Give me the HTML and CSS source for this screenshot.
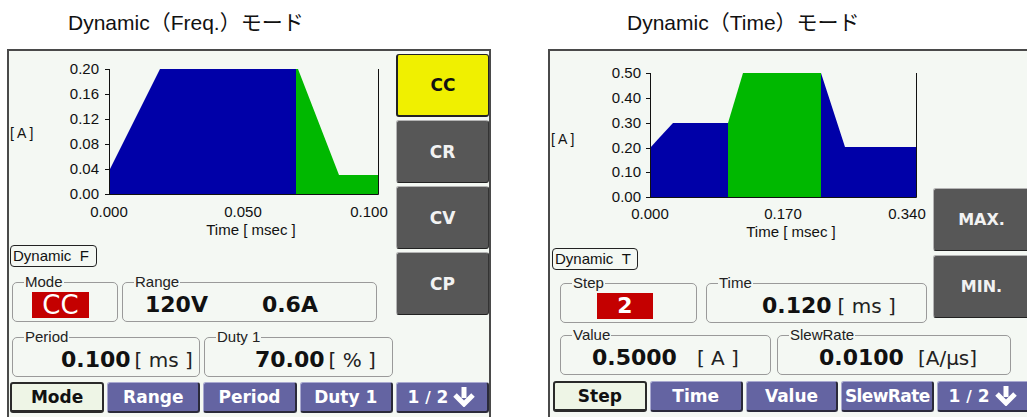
FILE: index.html
```html
<!DOCTYPE html>
<html lang="ja">
<head>
	<meta charset="UTF-8">
	<title>Dynamic モード</title>
	<meta name="viewport" content="width=device-width, initial-scale=1.0">
	<link rel="stylesheet" href="styles.css">
</head>
<body>

	<div class="page">

		<!-- Dynamic (Freq.) -->
		<section class="card card-freq">
			<h2 class="card-title">Dynamic（Freq.）モード</h2>
			<div class="screen">
				<div class="screen-body">
					<div class="screen-main">
						<svg class="chart" width="387" height="190" viewBox="9 51 387 190">
							<polygon class="wave-blue" points="109,194 109,171 160,69 296,69 296,194"/>
							<polygon class="wave-green" points="296,194 296,69 298,69 339,175 378,175 378,194"/>
							<path class="axis" d="M109.5 69V194.5H378.5V69M105 69.5h5M105 94.5h5M105 119.5h5M105 144.5h5M105 169.5h5M105 194.5h5"/>
							<text x="99" y="74" text-anchor="end">0.20</text>
							<text x="99" y="99" text-anchor="end">0.16</text>
							<text x="99" y="124" text-anchor="end">0.12</text>
							<text x="99" y="149" text-anchor="end">0.08</text>
							<text x="99" y="174" text-anchor="end">0.04</text>
							<text x="99" y="199" text-anchor="end">0.00</text>
							<text class="unit" x="10" y="138">[ A ]</text>
							<text x="109" y="217" text-anchor="middle">0.000</text>
							<text x="243" y="217" text-anchor="middle">0.050</text>
							<text x="369" y="217" text-anchor="middle">0.100</text>
							<text x="251" y="235" text-anchor="middle">Time [ msec ]</text>
						</svg>
						<div class="tag">Dynamic&nbsp;&nbsp;F</div>
						<div class="row row-top">
							<fieldset class="box w-mode">
								<legend>Mode</legend>
								<div class="val"><span class="flag flag-mode">CC</span></div>
							</fieldset>
							<fieldset class="box w-range">
								<legend>Range</legend>
								<div class="val"><span class="num">120V</span><span class="num range-cur">0.6A</span></div>
							</fieldset>
						</div>
					</div>
					<div class="screen-side">
						<div class="key is-on">CC</div>
						<div class="key">CR</div>
						<div class="key">CV</div>
						<div class="key">CP</div>
					</div>
				</div>
				<div class="row row-bottom">
					<fieldset class="box w-period">
						<legend>Period</legend>
						<div class="val"><span class="num">0.100</span><span class="unit-text">[ ms ]</span></div>
					</fieldset>
					<fieldset class="box w-duty">
						<legend>Duty 1</legend>
						<div class="val"><span class="num">70.00</span><span class="unit-text">[ % ]</span></div>
					</fieldset>
				</div>
				<div class="tabs">
					<div class="tab is-on">Mode</div>
					<div class="tab">Range</div>
					<div class="tab">Period</div>
					<div class="tab">Duty 1</div>
					<div class="tab tab-page"><span>1 <i>/</i> 2</span><svg class="arrow" width="24" height="20" viewBox="0 0 24 20"><path d="M9.5 0h5v11h-5z"/><path d="M3 8l9 9 9-9" fill="none" stroke="#fff" stroke-width="5"/></svg></div>
				</div>
			</div>
		</section>

		<!-- Dynamic (Time) -->
		<section class="card card-time">
			<h2 class="card-title">Dynamic（Time）モード</h2>
			<div class="screen">
				<div class="screen-body">
					<div class="screen-main">
						<svg class="chart" width="383" height="190" viewBox="550 51 383 190">
							<polygon class="wave-blue" points="650,197 650,148 660,137 673,123 728,123 728,197"/>
							<polygon class="wave-green" points="728,197 728,123 743,73 821,73 821,197"/>
							<polygon class="wave-blue" points="821,197 821,73 845,147 916,147 916,197"/>
							<path class="axis" d="M650.5 73V197.5H916.5V73M646 73.5h5M646 98.5h5M646 123.5h5M646 148.5h5M646 172.5h5M646 197.5h5"/>
							<text x="641" y="78" text-anchor="end">0.50</text>
							<text x="641" y="103" text-anchor="end">0.40</text>
							<text x="641" y="128" text-anchor="end">0.30</text>
							<text x="641" y="153" text-anchor="end">0.20</text>
							<text x="641" y="177" text-anchor="end">0.10</text>
							<text x="641" y="202" text-anchor="end">0.00</text>
							<text class="unit" x="551" y="144">[ A ]</text>
							<text x="650" y="219" text-anchor="middle">0.000</text>
							<text x="783" y="219" text-anchor="middle">0.170</text>
							<text x="907" y="219" text-anchor="middle">0.340</text>
							<text x="791" y="237" text-anchor="middle">Time [ msec ]</text>
						</svg>
						<div class="tag">Dynamic&nbsp;&nbsp;T</div>
						<div class="row row-top">
							<fieldset class="box w-step">
								<legend>Step</legend>
								<div class="val"><span class="flag flag-step">2</span></div>
							</fieldset>
							<fieldset class="box w-time">
								<legend>Time</legend>
								<div class="val"><span class="num">0.120</span><span class="unit-text">[ ms ]</span></div>
							</fieldset>
						</div>
					</div>
					<div class="screen-side">
						<div class="key">MAX.</div>
						<div class="key">MIN.</div>
					</div>
				</div>
				<div class="row row-bottom">
					<fieldset class="box w-value">
						<legend>Value</legend>
						<div class="val"><span class="num">0.5000</span><span class="unit-text unit-a">[ A ]</span></div>
					</fieldset>
					<fieldset class="box w-slew">
						<legend>SlewRate</legend>
						<div class="val"><span class="num">0.0100</span><span class="unit-text unit-slew">[A/μs]</span></div>
					</fieldset>
				</div>
				<div class="tabs">
					<div class="tab is-on">Step</div>
					<div class="tab">Time</div>
					<div class="tab">Value</div>
					<div class="tab tab-tight">SlewRate</div>
					<div class="tab tab-page"><span>1 <i>/</i> 2</span><svg class="arrow" width="24" height="20" viewBox="0 0 24 20"><path d="M9.5 0h5v11h-5z"/><path d="M3 8l9 9 9-9" fill="none" stroke="#fff" stroke-width="5"/></svg></div>
				</div>
			</div>
		</section>

	</div>

</body>
</html>
```

FILE: styles.css
```css
html, body {
	background: #fff;
	margin: 0;
	overflow: hidden;
	padding: 0;
}
.page {
	display: flex;
	height: 417px;
	width: 1027px;
}
.card {
	flex: none;
	width: 484px;
}
.card-freq {
	margin-left: 7px;
}
.card-time {
	margin-left: 57px;
}
.card-title {
	color: #111;
	font: normal 21px/24px "Liberation Sans", "Noto Sans CJK JP", sans-serif;
	margin: 0;
	padding: 11px 0 14px;
}
.card-freq .card-title {
	padding-left: 61px;
}
.card-time .card-title {
	padding-left: 79px;
}

/* instrument screen */
.screen {
	background: #f4f8f3;
	border: 2px solid #4a4a4a;
	border-bottom: none;
	display: flex;
	flex-direction: column;
	height: 380px;
}
.screen-body {
	display: flex;
}
.screen-main {
	display: flex;
	flex-direction: column;
	flex: none;
}
.card-freq .screen-main {
	width: 387px;
}
.card-time .screen-main {
	width: 383px;
}
.screen-side {
	display: flex;
	flex: 1;
	flex-direction: column;
	gap: 3px;
}
.card-freq .screen-side {
	padding-top: 3px;
}
.card-time .screen-side {
	gap: 4px;
	padding-top: 137px;
}

/* chart */
.chart {
	display: block;
}
.chart text {
	fill: #111;
	font: 15px "Liberation Sans", sans-serif;
}
.chart .unit {
	font-size: 14px;
}
.wave-blue {
	fill: #0000a8;
}
.wave-green {
	fill: #00b800;
}
.axis {
	fill: none;
	stroke: #111;
	stroke-width: 1;
}

.tag {
	align-self: flex-start;
	border: 1px solid #222;
	border-radius: 4px;
	box-sizing: border-box;
	color: #111;
	font: 15px/20px "Liberation Sans", sans-serif;
	height: 22px;
	padding: 0 3px 0 2px;
}
.card-freq .tag {
	margin: 4px 0 0 1px;
	width: 87px;
}
.card-time .tag {
	margin: 7px 0 0 2px;
	width: 86px;
}

/* value boxes */
.row {
	display: flex;
}
.card-freq .row {
	gap: 4px;
	padding-left: 3px;
}
.card-freq .row-top {
	margin-top: 8px;
}
.card-freq .row-bottom {
	margin-top: 8px;
}
.card-time .row {
	padding-left: 10px;
}
.card-time .row-top {
	gap: 9px;
	margin-top: 6px;
}
.card-time .row-bottom {
	gap: 6px;
	margin-top: 5px;
}
.box {
	border: 1px solid #9a9a9a;
	border-radius: 5px;
	box-sizing: border-box;
	height: 47px;
	margin: 0;
	min-width: 0;
	padding: 0;
}
.box legend {
	color: #222;
	font: 15px/14px "Liberation Sans", sans-serif;
	margin-left: 11px;
	padding: 0 1px;
}
.val {
	align-items: center;
	display: flex;
	height: 31px;
	padding-left: var(--pad);
}
.w-mode { width: 106px; --pad: 19px; }
.w-range { width: 255px; --pad: 22px; }
.w-period { width: 188px; --pad: 48px; }
.w-duty { width: 189px; --pad: 50px; }
.w-step { width: 137px; --pad: 36px; }
.w-time { width: 221px; --pad: 55px; }
.w-value { width: 211px; --pad: 31px; }
.w-slew { width: 234px; --pad: 41px; }

.flag {
	background: #c40000;
	color: #fff;
	display: block;
	height: 26px;
	text-align: center;
}
.flag-mode {
	font: 26px/26px "DejaVu Sans", sans-serif;
	width: 57px;
}
.flag-step {
	font: bold 22px/26px "DejaVu Sans", sans-serif;
	width: 56px;
}
.num {
	color: #111;
	font: bold 22px/28px "DejaVu Sans", sans-serif;
}
.range-cur {
	margin-left: 54px;
}
.unit-text {
	color: #222;
	font: 20px/28px "DejaVu Sans", sans-serif;
	margin-left: 4px;
}
.w-time .unit-text {
	margin-left: 6px;
}
.unit-a {
	margin-left: 20px;
}
.unit-slew {
	margin-left: 14px;
}

/* side keys */
.key {
	align-items: center;
	background: #575757;
	border: 1px solid #b4b4b4;
	border-bottom-color: #222;
	border-radius: 3px;
	border-right-color: #333;
	box-sizing: border-box;
	color: #f2f2f2;
	display: flex;
	font: bold 17px "DejaVu Sans", sans-serif;
	height: 63px;
	justify-content: center;
}
.card-time .key {
	font-size: 16px;
}
.key.is-on {
	background: #f0f000;
	border: 1px solid #222;
	border-bottom-width: 2px;
	border-left-width: 2px;
	color: #111;
}

/* soft key tabs */
.tabs {
	display: flex;
	gap: 3px;
	height: 31px;
}
.card-freq .tabs {
	margin-top: 5px;
	padding-left: 1px;
}
.card-time .tabs {
	margin-top: 6px;
	padding-left: 3px;
}
.tab {
	align-items: center;
	background: #6464a2;
	border: 1px solid #a9a9d0;
	border-bottom: 2px solid #2a2a3a;
	border-radius: 3px;
	border-right: 2px solid #2a2a3a;
	box-sizing: border-box;
	color: #fff;
	display: flex;
	flex: 1 1 0;
	font: bold 17px "DejaVu Sans", sans-serif;
	justify-content: center;
	min-width: 0;
	white-space: nowrap;
}
.tab.is-on {
	background: #eef5e6;
	border: 2px solid #2a2a2a;
	border-bottom-width: 3px;
	color: #111;
}
.tab-tight {
	letter-spacing: -0.6px;
}
.tab-page {
	gap: 4px;
}
.tab-page i {
	font-size: 15px;
	font-style: normal;
}
.arrow {
	fill: #fff;
	flex: none;
}
```
